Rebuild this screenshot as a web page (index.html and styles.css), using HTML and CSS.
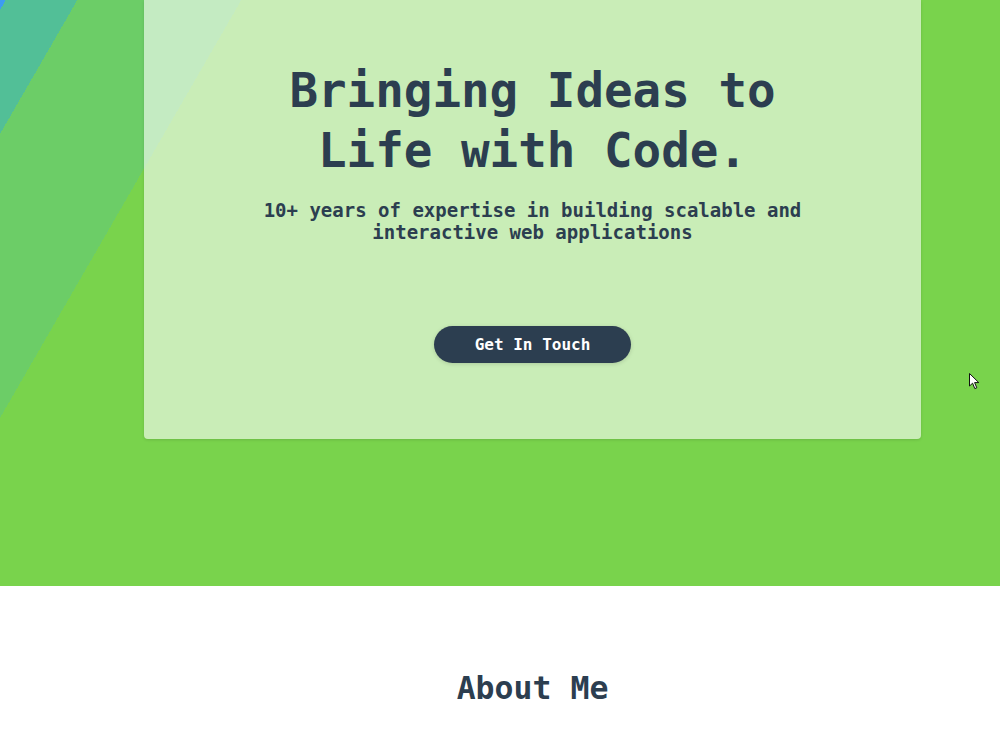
FILE: index.html
```html
<!DOCTYPE html>
<html lang="en">
<head>
<meta charset="utf-8">
<title>Portfolio</title>
<link rel="stylesheet" href="styles.css">
</head>
<body>
  <section class="hero">
    <div class="hero-inner">
      <div class="hero-card">
        <h1 class="hero-title">Bringing Ideas to Life with Code.</h1>
        <p class="hero-sub">10+ years of expertise in building scalable and interactive web applications</p>
        <a class="btn" href="#contact">Get In Touch</a>
      </div>
    </div>
    <svg class="pointer" width="12" height="17" viewBox="0 0 12 17" aria-hidden="true">
      <path d="M0.5 0.5 L0.5 13 L3.6 10.2 L5.8 15.6 L7.8 14.8 L5.6 9.6 L9.8 9.6 Z" fill="#fff" stroke="#111" stroke-width="1" stroke-linejoin="round"/>
    </svg>
  </section>
  <section class="about" id="about">
    <div class="about-inner">
      <h2 class="section-title">About Me</h2>
    </div>
  </section>
</body>
</html>
```
FILE: styles.css
```css
* {
  box-sizing: border-box;
}

html, body {
  margin: 0;
  padding: 0;
}

body {
  font-family: "DejaVu Sans Mono", "Liberation Mono", monospace;
  color: #2c3e50;
  background: #fff;
  overflow: hidden;
}

/* hero with angled colour bands */
.hero {
  position: relative;
  height: 586px;
  background: linear-gradient(120deg,
    #3d9cf0 0 5px,
    #52bf97 5px 67px,
    #6ccd67 67px 209px,
    #79d34c 209px);
}

.hero-inner {
  padding-left: 65px;
}

.hero-card {
  width: 777px;
  margin: 0 auto;
  padding: 61px 40px 76px;
  background: rgba(255, 255, 255, 0.6);
  border-radius: 0 0 4px 4px;
  box-shadow: 0 1px 3px rgba(0, 0, 0, 0.12);
  text-align: center;
  display: flex;
  flex-direction: column;
  align-items: center;
}

.hero-title {
  margin: 0;
  max-width: 600px;
  font-size: 47.5px;
  line-height: 60px;
  font-weight: 700;
  color: #2c3e50;
}

.hero-sub {
  margin: 18px 0 0;
  max-width: 560px;
  font-size: 19px;
  line-height: 22px;
  font-weight: 700;
  color: #2c3e50;
}

.btn {
  margin-top: 83px;
  display: inline-block;
  padding: 9px 41px;
  font-size: 16px;
  line-height: 19px;
  font-weight: 700;
  color: #fff;
  background: #2c3e50;
  border-radius: 20px;
  text-decoration: none;
  box-shadow: 0 1px 4px rgba(0, 0, 0, 0.15);
}

.pointer {
  position: absolute;
  left: 969px;
  top: 373px;
}

/* about section */
.about {
  background: #fff;
  padding: 84px 0 30px;
}

.about-inner {
  padding-left: 65px;
  text-align: center;
}

.section-title {
  margin: 0;
  font-size: 31.5px;
  font-weight: 700;
  color: #2c3e50;
}
```
